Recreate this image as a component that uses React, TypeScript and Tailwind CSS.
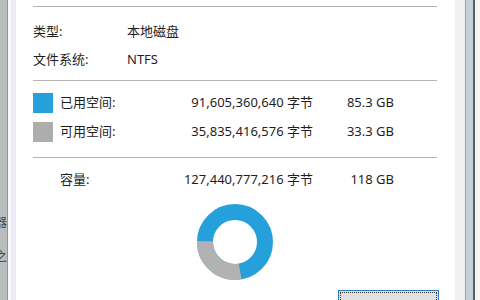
const font = { fontFamily: '"Noto Sans", "Noto Sans CJK SC", sans-serif' };

function Divider() {
  return <div className="h-px w-full bg-[#b5b5b5]" />;
}

function SpaceRow({ swatch, label, bytes, size }: { swatch?: string; label: string; bytes: string; size: string }) {
  return (
    <div className="flex items-center h-[29px]">
      <div className={`w-[20px] h-[20px] mr-[7px] ${swatch ?? ""}`} />
      <span className="w-[100px]">{label}</span>
      <span className="w-[153px] text-right">{bytes}</span>
      <span className="w-[81px] text-right">{size}</span>
    </div>
  );
}

function Donut() {
  const c = 2 * Math.PI * 30;
  const free = 35835416576 / 127440777216;
  return (
    <svg width="80" height="80" viewBox="0 0 80 80">
      <circle cx="40" cy="40" r="30" fill="none" stroke="#26a0da" strokeWidth="16" />
      <circle
        cx="40"
        cy="40"
        r="30"
        fill="none"
        stroke="#b2b2b2"
        strokeWidth="16"
        strokeDasharray={`${free * c} ${c}`}
        transform="rotate(80 40 40)"
      />
    </svg>
  );
}

export default function App() {
  return (
    <div className="flex w-[480px] h-[300px] overflow-hidden bg-white text-[13px] text-[#1e1e1e]" style={font}>
      <div className="w-[7px] bg-[#b8bdbe] overflow-hidden flex flex-col items-end pt-[214px] gap-[16px] text-[12px] text-[#444]">
        <span className="whitespace-nowrap">储器</span>
        <span className="whitespace-nowrap">盘之</span>
      </div>
      <div className="w-px bg-[#8b9a9d]" />
      <div className="w-[3px] bg-[#f7f7fb]" />
      <div className="w-[5px] bg-[#eceaf5]" />

      <div className="flex-1 flex flex-col pl-[17px] pr-[18px] bg-white overflow-hidden [&>*]:shrink-0">
        <div className="h-[6px]" />
        <Divider />
        <div className="flex items-center h-[28px] mt-[11px]">
          <span className="w-[94px]">类型:</span>
          <span>本地磁盘</span>
        </div>
        <div className="flex items-center h-[28px]">
          <span className="w-[94px]">文件系统:</span>
          <span>NTFS</span>
        </div>
        <div className="h-[6px]" />
        <Divider />
        <div className="h-[7px]" />
        <SpaceRow swatch="bg-[#26a0da]" label="已用空间:" bytes="91,605,360,640 字节" size="85.3 GB" />
        <SpaceRow swatch="bg-[#adadad]" label="可用空间:" bytes="35,835,416,576 字节" size="33.3 GB" />
        <div className="h-[11px]" />
        <Divider />
        <div className="h-[7px]" />
        <SpaceRow label="容量:" bytes="127,440,777,216 字节" size="118 GB" />
        <div className="flex justify-center mt-[8px]">
          <Donut />
        </div>
        <div className="flex justify-end mt-[8px] -mr-[2px]">
          <div className="w-[101px] h-[24px] border border-[#2f7bb0] bg-[#e1e1e1] p-px">
            <div className="w-full h-full border border-dotted border-[#333]" />
          </div>
        </div>
      </div>

      <div className="w-[10px] bg-[#f0f0f0]" />
      <div className="w-px bg-[#8ea4b7]" />
      <div className="w-[7px] bg-[#c8d0d8]" />
      <div className="w-[2px] bg-[#5c5c5c]" />
      <div className="w-[5px] bg-[#f4f4f4]" />
    </div>
  );
}
